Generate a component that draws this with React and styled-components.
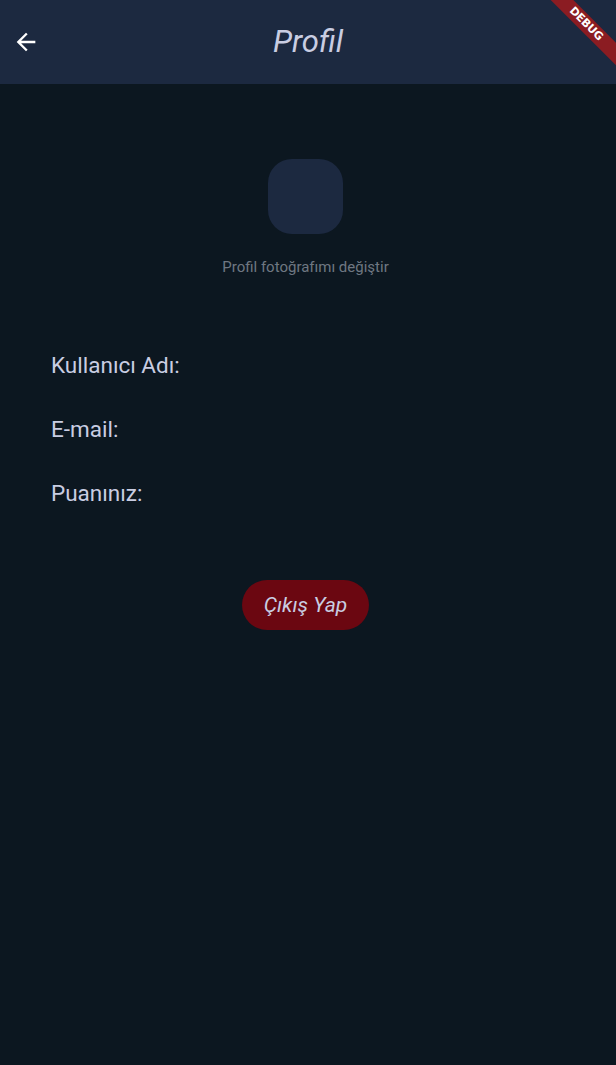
import styled, { createGlobalStyle } from "styled-components";

const Global = createGlobalStyle`
  html, body {
    margin: 0;
    padding: 0;
    background: #0c1720;
  }
  body {
    font-family: Roboto, "Noto Sans", sans-serif;
  }
`;

const Style = {
  Page: styled.div`
    position: relative;
    width: 616px;
    min-height: 1065px;
    background: #0c1720;
    overflow: hidden;
  `,
  AppBar: styled.div`
    height: 84px;
    background: #1c2940;
    display: flex;
    align-items: center;
    padding: 0 12px;
    box-sizing: border-box;
    position: relative;
  `,
  BackBtn: styled.button`
    width: 28px;
    height: 28px;
    padding: 0;
    border: none;
    background: transparent;
    display: flex;
    align-items: center;
    justify-content: center;
  `,
  Title: styled.div`
    flex: 1;
    text-align: center;
    font-size: 31px;
    font-style: italic;
    color: #c9cde2;
    margin-right: 28px;
    margin-top: -2px;
  `,
  Banner: styled.div`
    position: absolute;
    top: 16px;
    right: -30px;
    width: 120px;
    height: 16px;
    background: #8b1c22;
    transform: rotate(45deg);
    color: #ffffff;
    font-family: "DejaVu Sans", sans-serif;
    font-weight: bold;
    font-size: 11px;
    line-height: 16px;
    text-align: center;
    letter-spacing: -0.2px;
  `,
  Content: styled.div`
    display: flex;
    flex-direction: column;
    align-items: center;
    padding: 75px 5px 0 0;
  `,
  Avatar: styled.div`
    width: 75px;
    height: 75px;
    border-radius: 24px;
    background: #1c2940;
  `,
  Change: styled.div`
    margin-top: 24px;
    font-size: 15px;
    color: #6f7782;
  `,
  Fields: styled.div`
    align-self: stretch;
    display: flex;
    flex-direction: column;
    gap: 37px;
    padding: 76px 51px 0;
  `,
  Label: styled.div`
    font-size: 22.5px;
    line-height: 27px;
    color: #c9cde2;
  `,
  LogoutBtn: styled.button`
    margin-top: 73px;
    height: 50px;
    padding: 0 22px;
    border: none;
    border-radius: 25px;
    background: #6b0711;
    color: #c9cde2;
    font-family: Roboto, sans-serif;
    font-style: italic;
    font-size: 21px;
  `,
};

function App() {
  return (
    <>
      <Global />
      <Style.Page>
        <Style.AppBar>
          <Style.BackBtn>
            <svg width="28" height="28" viewBox="0 0 24 24">
              <path d="M20 11H7.83l5.59-5.59L12 4l-8 8 8 8 1.41-1.41L7.83 13H20v-2z" fill="#ffffff" />
            </svg>
          </Style.BackBtn>
          <Style.Title>Profil</Style.Title>
          <Style.Banner>DEBUG</Style.Banner>
        </Style.AppBar>
        <Style.Content>
          <Style.Avatar />
          <Style.Change>Profil fotoğrafımı değiştir</Style.Change>
          <Style.Fields>
            <Style.Label>Kullanıcı Adı:</Style.Label>
            <Style.Label>E-mail:</Style.Label>
            <Style.Label>Puanınız:</Style.Label>
          </Style.Fields>
          <Style.LogoutBtn>Çıkış Yap</Style.LogoutBtn>
        </Style.Content>
      </Style.Page>
    </>
  );
}

export default App;
